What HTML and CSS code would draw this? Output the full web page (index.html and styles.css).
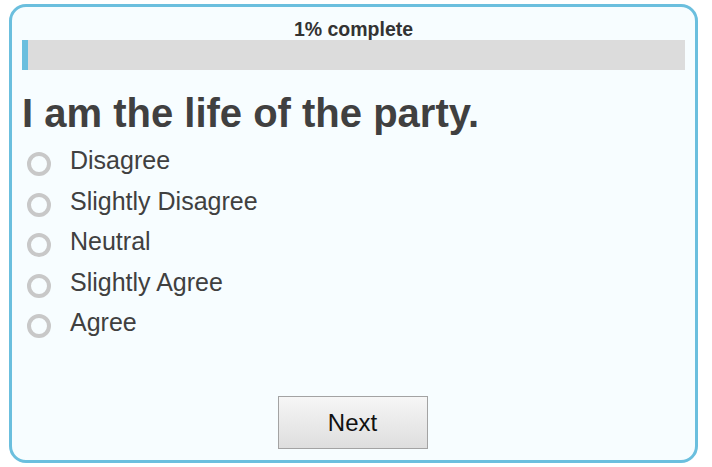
FILE: index.html
```html
<!DOCTYPE html>
<html>
<head>
<meta charset="utf-8">
<link rel="stylesheet" href="styles.css">
</head>
<body>
<div class="card">
  <div class="progress-label">1% complete</div>
  <div class="progress-bar"><div class="progress-fill" style="width:6px"></div></div>
  <h1 class="question">I am the life of the party.</h1>
  <ul class="options">
    <li class="option"><span class="radio"></span><span class="label">Disagree</span></li>
    <li class="option"><span class="radio"></span><span class="label">Slightly Disagree</span></li>
    <li class="option"><span class="radio"></span><span class="label">Neutral</span></li>
    <li class="option"><span class="radio"></span><span class="label">Slightly Agree</span></li>
    <li class="option"><span class="radio"></span><span class="label">Agree</span></li>
  </ul>
  <div class="actions"><button class="next">Next</button></div>
</div>
</body>
</html>
```
FILE: styles.css
```css
html, body {
  margin: 0;
  padding: 0;
  background: #ffffff;
}
body {
  font-family: "Liberation Sans", Arial, sans-serif;
  padding: 4px 0 0 9px;
}
.card {
  box-sizing: border-box;
  width: 689px;
  height: 459px;
  border: 3px solid #6bbfde;
  border-radius: 17px;
  background: #f7fdff;
  padding: 12px 10px 0 10px;
  display: flex;
  flex-direction: column;
}
.progress-label {
  text-align: center;
  font-weight: bold;
  font-size: 19.5px;
  line-height: 20px;
  color: #333333;
}
.progress-bar {
  margin-top: 1px;
  height: 30px;
  background: #dcdcdc;
  display: flex;
}
.progress-fill {
  height: 100%;
  background: #6bbfde;
}
.question {
  margin: 20px 0 0 0;
  font-size: 40px;
  line-height: 46px;
  font-weight: bold;
  color: #404040;
}
.options {
  list-style: none;
  margin: 4px 0 0 0;
  padding: 0;
}
.option {
  display: flex;
  align-items: center;
  height: 40.5px;
  font-size: 25px;
  color: #404040;
}
.radio {
  box-sizing: border-box;
  width: 24px;
  height: 24px;
  border: 4px solid #c8c8c8;
  border-radius: 50%;
  margin: 8px 19px 0 5px;
  flex: none;
}
.label {
  line-height: 40.5px;
}
.actions {
  margin-top: auto;
  margin-bottom: 11px;
  display: flex;
  justify-content: center;
}
.next {
  width: 150px;
  height: 53px;
  border: 1px solid #a3a3a3;
  background: linear-gradient(#f6f6f6, #dedede);
  font-family: "Liberation Sans", Arial, sans-serif;
  font-size: 24px;
  color: #111111;
  padding: 0;
  margin-right: 2px;
}
```
